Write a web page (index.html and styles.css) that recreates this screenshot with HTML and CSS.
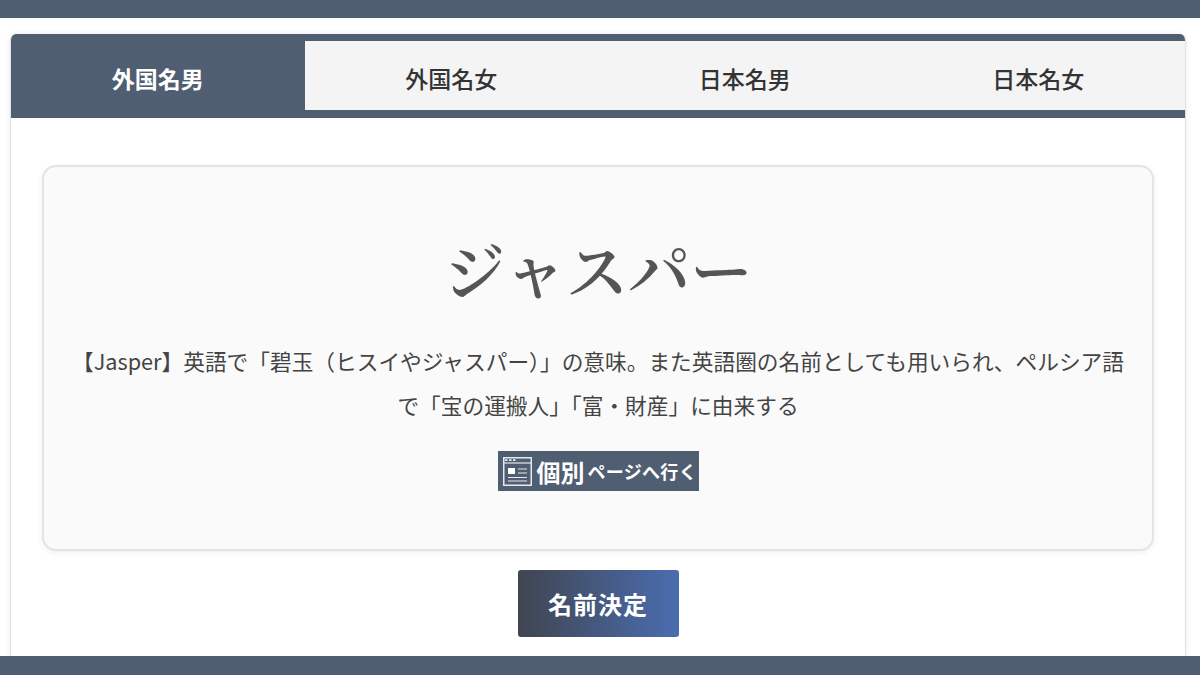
FILE: index.html
```html
<!DOCTYPE html>
<html lang="ja">
<head>
    <meta charset="UTF-8">
    <meta name="viewport" content="width=device-width, initial-scale=1.0">
    <title>名前決定</title>
    <link rel="stylesheet" href="styles.css">
</head>
<body>
    <div class="top-bar"></div>
    <main class="card">
        <nav class="tabs">
            <a href="#" class="tab active">外国名男</a>
            <a href="#" class="tab">外国名女</a>
            <a href="#" class="tab">日本名男</a>
            <a href="#" class="tab">日本名女</a>
        </nav>
        <div class="card-body">
            <section class="name-panel">
                <h1 class="name-title">ジャスパー</h1>
                <p class="name-desc">【Jasper】英語で「碧玉（ヒスイやジャスパー）」の意味。また英語圏の名前としても用いられ、ペルシア語で「宝の運搬人」「富・財産」に由来する</p>
                <a href="#" class="page-link">
                    <svg class="page-icon" width="29" height="29" viewBox="0 0 29 29" fill="none" stroke="#e6e9ed">
                        <rect x="0.750" y="0.750" width="27.500" height="27.500" stroke-width="1.500"/>
                        <path d="M1 6H28" stroke-width="1.200"/>
                        <path d="M2 3.200H4.500M6 3.200H8.500M10 3.200H12.500" stroke-width="1.800"/>
                        <rect x="5" y="11" width="7" height="6" fill="#fff" stroke="none"/>
                        <path d="M15 12H24M15 16H24M5 20.500H24M5 24H24" stroke-width="1.200"/>
                    </svg>
                    <span class="link-strong">個別</span><span class="link-text">ページへ行く</span>
                </a>
            </section>
            <button type="button" class="decide-button">名前決定</button>
        </div>
    </main>
    <div class="bottom-bar"></div>
</body>
</html>
```

FILE: styles.css
```css
/* --- General Setup --- */
:root {
    --bar-color: #4f5e71;
    --text-color: #444;
    --font-jp: "Noto Sans CJK JP", "Noto Sans", sans-serif;
}
html, body {
    height: 100%;
}
body {
    margin: 0;
    display: flex;
    flex-direction: column;
    overflow: hidden;
    background-color: #fff;
    color: var(--text-color);
    font-family: var(--font-jp);
}
.top-bar {
    height: 18px;
    flex: none;
    background-color: var(--bar-color);
}
.bottom-bar {
    height: 19px;
    flex: none;
    background-color: var(--bar-color);
}

/* --- Card & Tabs --- */
.card {
    flex: 1;
    min-height: 0;
    margin: 16px 14px 0 10px;
    border-left: 1px solid #e2e2e2;
    border-right: 1px solid #e2e2e2;
    border-radius: 6px 6px 0 0;
    box-shadow: 0 0 6px rgba(0, 0, 0, 0.08);
    overflow: hidden;
}
.tabs {
    display: grid;
    grid-template-columns: repeat(4, 1fr);
    padding: 7px 0 8px;
    background-color: var(--bar-color);
}
.tab {
    height: 69px;
    box-sizing: border-box;
    padding-top: 5px;
    display: flex;
    align-items: center;
    justify-content: center;
    background-color: #f4f4f4;
    color: #333;
    font-size: 23px;
    font-weight: 500;
    text-decoration: none;
}
.tab.active {
    background-color: var(--bar-color);
    color: #fff;
    font-weight: 700;
}

/* --- Name Panel --- */
.card-body {
    padding: 47px 31px 0;
    display: flex;
    flex-direction: column;
    align-items: center;
}
.name-panel {
    width: 100%;
    height: 386px;
    box-sizing: border-box;
    padding: 60px 20px 0;
    background-color: #fafafa;
    border: 2px solid #e4e4e4;
    border-radius: 14px;
    box-shadow: 0 2px 6px rgba(0, 0, 0, 0.06);
    text-align: center;
}
.name-title {
    margin: 0;
    font-family: "Noto Serif CJK JP", "Noto Sans CJK JP", serif;
    font-size: 62px;
    line-height: 84px;
    font-weight: 600;
    color: #555;
}
.name-desc {
    margin: 28px 0 0;
    font-size: 21.700px;
    line-height: 44px;
    color: var(--text-color);
}
.page-link {
    margin-top: 24px;
    width: 201px;
    height: 40px;
    display: inline-flex;
    align-items: center;
    box-sizing: border-box;
    padding-left: 5px;
    background-color: var(--bar-color);
    color: #fff;
    text-decoration: none;
    white-space: nowrap;
    vertical-align: top;
}
.page-icon {
    flex: none;
    margin-right: 5px;
}
.link-strong {
    font-size: 24px;
    font-weight: 700;
    margin-right: 3px;
}
.link-text {
    font-size: 18px;
    font-weight: 700;
    letter-spacing: 0.300px;
}

/* --- Button --- */
.decide-button {
    margin-top: 19px;
    width: 161px;
    height: 67px;
    flex: none;
    border: 0;
    border-radius: 3px;
    background: linear-gradient(to right, #404550, #4a6db0);
    color: #fff;
    font-family: var(--font-jp);
    font-size: 24px;
    font-weight: 700;
    letter-spacing: 1px;
    cursor: pointer;
}
```
